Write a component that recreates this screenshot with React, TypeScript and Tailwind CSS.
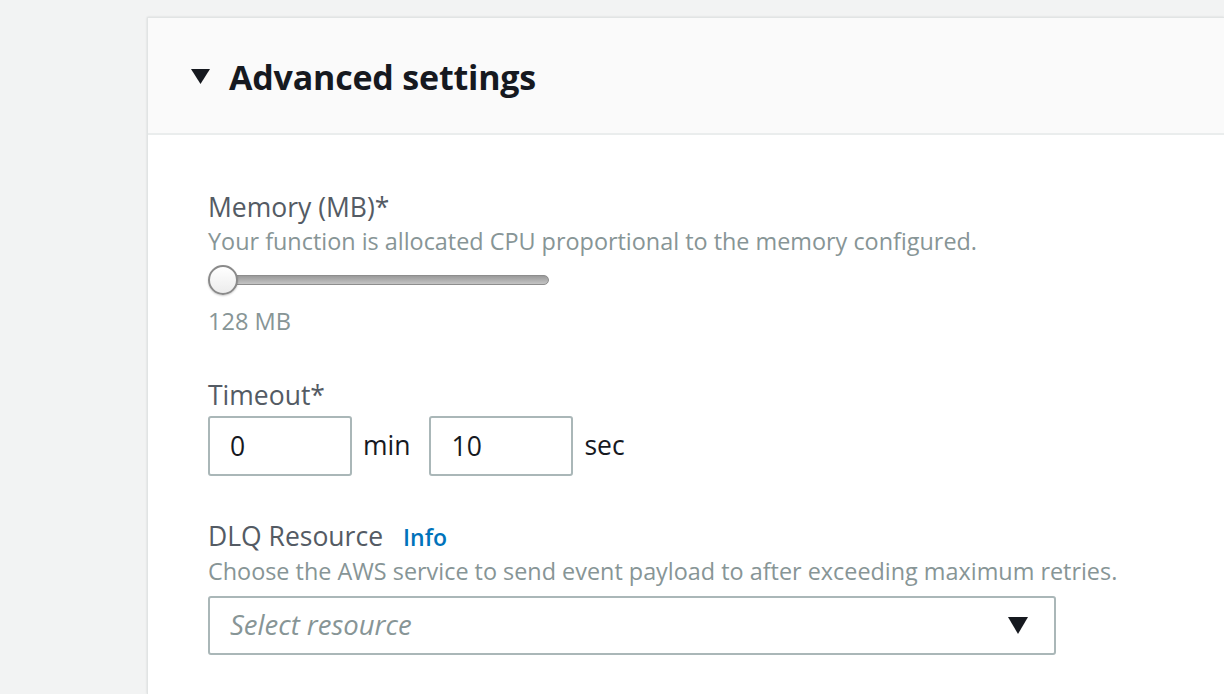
import { useState } from "react";

export default function App() {
  const [minutes, setMinutes] = useState("0");
  const [seconds, setSeconds] = useState("10");

  return (
    <div
      className="min-h-[694px] w-full overflow-hidden bg-[#f2f3f3] pt-[17px] pl-[147px]"
      style={{ fontFamily: '"Open Sans", "Liberation Sans", sans-serif' }}
    >
      <div className="h-[677px] border-l border-t border-[#e1e4e4] bg-white shadow-[0_0_2px_rgba(0,0,0,0.12)]">
        {/* Header */}
        <div className="flex h-[117px] items-center gap-[19px] border-b-2 border-[#eaeded] bg-[#fafafa] pl-[43px]">
          <svg width="19" height="15" viewBox="0 0 19 15" className="mt-[2px]">
            <path d="M0 0 H19 L9.5 15 Z" fill="#16191f" />
          </svg>
          <h2 className="mt-[3px] text-[34px] font-bold tracking-[-0.2px] text-[#16191f]">Advanced settings</h2>
        </div>

        {/* Body */}
        <div className="flex flex-col pl-[60px] pt-[55px]">
          {/* Memory */}
          <div className="flex flex-col">
            <label className="text-[26.5px] leading-[34px] text-[#545b64]">Memory (MB)*</label>
            <p className="mt-[1px] text-[23.4px] leading-[32px] text-[#879596]">
              Your function is allocated CPU proportional to the memory configured.
            </p>
            <div className="relative mt-[8px] h-[30px] w-[341px]">
              <div className="absolute top-[10px] left-[14px] right-0 h-[10px] rounded-full border border-[#8d8d8d] bg-gradient-to-b from-[#9a9a9a] to-[#c4c4c4]" />
              <div className="absolute top-0 left-0 h-[30px] w-[30px] rounded-full border-2 border-[#8a8a8a] bg-gradient-to-b from-white to-[#ececec] shadow-[0_1px_2px_rgba(0,0,0,0.2)]" />
            </div>
            <span className="mt-[11px] text-[23.6px] leading-[30px] text-[#879596]">128 MB</span>
          </div>

          {/* Timeout */}
          <div className="mt-[42px] flex flex-col">
            <label className="text-[26.5px] leading-[34px] text-[#545b64]">Timeout*</label>
            <div className="mt-[4px] flex items-center">
              <input
                value={minutes}
                onChange={(e) => setMinutes(e.target.value)}
                className="h-[60px] w-[144px] rounded-[3px] border-2 border-[#aab7b8] px-[20px] text-[26.5px] text-[#16191f] outline-none"
              />
              <span className="ml-[11px] text-[26.5px] text-[#16191f]">min</span>
              <input
                value={seconds}
                onChange={(e) => setSeconds(e.target.value)}
                className="ml-[19px] h-[60px] w-[144px] rounded-[3px] border-2 border-[#aab7b8] px-[20px] text-[26.5px] text-[#16191f] outline-none"
              />
              <span className="ml-[11px] text-[26.5px] text-[#16191f]">sec</span>
            </div>
          </div>

          {/* DLQ Resource */}
          <div className="mt-[43px] flex flex-col">
            <div className="flex items-baseline gap-[20px]">
              <label className="text-[26.5px] leading-[34px] text-[#545b64]">DLQ Resource</label>
              <a className="text-[23px] font-semibold text-[#0073bb]">Info</a>
            </div>
            <p className="mt-0 text-[23.4px] leading-[32px] text-[#879596]">
              Choose the AWS service to send event payload to after exceeding maximum retries.
            </p>
            <div className="mt-[9px] flex h-[59px] w-[848px] items-center justify-between rounded-[3px] border-2 border-[#aab7b8] pl-[20px] pr-[26px]">
              <span className="text-[27.5px] italic text-[#879596]">Select resource</span>
              <svg width="20" height="17" viewBox="0 0 20 17">
                <path d="M0 0 H20 L10 17 Z" fill="#16191f" />
              </svg>
            </div>
          </div>
        </div>
      </div>
    </div>
  );
}
